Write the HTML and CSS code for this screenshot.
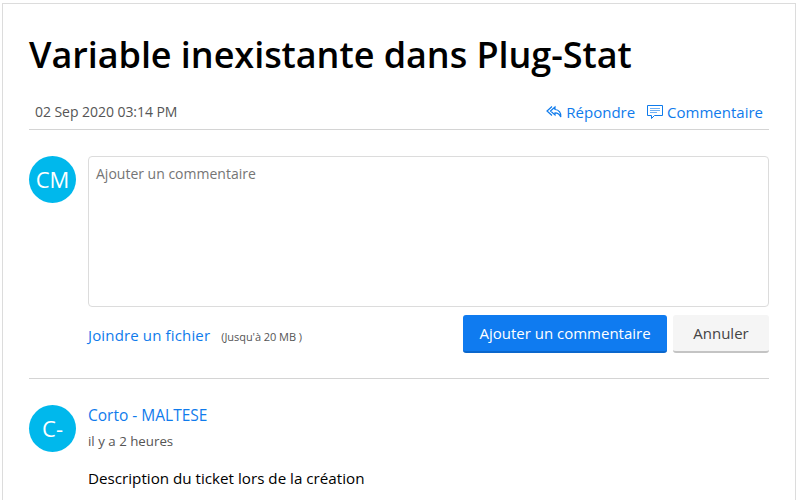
FILE: index.html
```html
<!DOCTYPE html>
<html lang="fr">
<head>
	<meta charset="utf-8">
	<title>Variable inexistante dans Plug-Stat</title>
	<link rel="stylesheet" href="styles.css">
</head>
<body>
	<div class="card">
		<h1 class="title">Variable inexistante dans Plug-Stat</h1>

		<div class="meta">
			<span class="date">02 Sep 2020 03:14 PM</span>
			<div class="actions">
				<a class="action" href="#">
					<svg class="icon" viewBox="0 0 16 14" width="16" height="14" fill="none" stroke="currentColor" stroke-width="1.200">
						<path d="M6 1.500 1 6l5 4.500"/>
						<path d="M9 2 4.500 6 9 10V7.800c2.500 0 4.500.7 5.800 4.200.6-4-1.800-7.300-5.800-7.500z"/>
					</svg>
					Répondre
				</a>
				<a class="action" href="#">
					<svg class="icon" viewBox="0 0 16 14" width="16" height="14" fill="none" stroke="currentColor" stroke-width="1">
						<path d="M.5.500h15v10H7.500L4.500 13.500v-3h-4z"/>
						<path class="icon-lines" d="M3 3.500h10M3 5.500h10M3 7.500h7"/>
					</svg>
					Commentaire
				</a>
			</div>
		</div>

		<div class="row new-comment">
			<div class="avatar">CM</div>
			<div class="main">
				<textarea class="input" placeholder="Ajouter un commentaire"></textarea>
				<div class="form-foot">
					<div class="attach">
						<a class="attach-link" href="#">Joindre un fichier</a>
						<small class="limit">(Jusqu'à 20 MB )</small>
					</div>
					<div class="buttons">
						<button class="btn btn-primary">Ajouter un commentaire</button>
						<button class="btn btn-cancel">Annuler</button>
					</div>
				</div>
			</div>
		</div>

		<div class="row comment">
			<div class="avatar">C-</div>
			<div class="main">
				<a class="author" href="#">Corto - MALTESE</a>
				<div class="ago">il y a 2 heures</div>
				<p class="text">Description du ticket lors de la création</p>
			</div>
		</div>
	</div>
</body>
</html>
```

FILE: styles.css
```css
html, body {
	height: 100%;
}

body {
	margin: 0;
	overflow: hidden;
	background: #fff;
	color: #000;
	font-family: "Open Sans", "Noto Sans", sans-serif;
	font-size: 15px;
}

a {
	color: #0f7bec;
	text-decoration: none;
}

.card {
	box-sizing: border-box;
	height: 520px;
	margin: 3px 2px 0;
	padding: 0 26px;
	border: 1px solid #dcdcdc;
}

.title {
	margin: 0;
	padding-top: 26px;
	font-size: 36px;
	line-height: 50px;
	font-weight: 600;
	letter-spacing: -0.05px;
}

.meta {
	display: flex;
	justify-content: space-between;
	align-items: center;
	box-sizing: border-box;
	height: 50px;
	padding: 14px 6px 0;
	border-bottom: 1px solid #d4d4d4;
}

.date {
	font-size: 14px;
	letter-spacing: -0.05px;
	color: #555;
}

.actions {
	display: flex;
	gap: 12px;
}

.action {
	display: flex;
	align-items: center;
	gap: 4px;
	font-size: 15px;
}

.icon {
	flex: none;
}

.icon-lines {
	stroke-opacity: 0.6;
}

.row {
	display: flex;
	gap: 12px;
}

.new-comment {
	padding: 26px 0 25px;
	border-bottom: 1px solid #d4d4d4;
}

.comment {
	padding-top: 26px;
}

.avatar {
	flex: none;
	width: 47px;
	height: 47px;
	border-radius: 50%;
	background: #00b8ec;
	color: #fff;
	font-size: 22px;
	line-height: 47px;
	text-align: center;
}

.main {
	flex: 1;
	min-width: 0;
}

.input {
	display: block;
	box-sizing: border-box;
	width: 100%;
	height: 151px;
	padding: 7px 7px;
	border: 1px solid #dcdcdc;
	border-radius: 4px;
	font: inherit;
	font-size: 14px;
	resize: none;
}

.input::placeholder {
	color: #757575;
}

.form-foot {
	display: flex;
	justify-content: space-between;
	margin-top: 8px;
}

.attach {
	display: flex;
	align-items: baseline;
	gap: 11px;
	padding-top: 10px;
}

.attach-link {
	font-size: 15px;
	letter-spacing: 0.15px;
}

.limit {
	font-size: 11px;
	letter-spacing: -0.05px;
	color: #555;
}

.buttons {
	display: flex;
	gap: 6px;
}

.btn {
	height: 38px;
	border: 0;
	border-radius: 3px;
	font: inherit;
	font-size: 15px;
}

.btn-primary {
	width: 204px;
	background: #0f7bf0;
	border-bottom: 2px solid #0b67cc;
	color: #fff;
}

.btn-cancel {
	width: 96px;
	background: #f5f5f5;
	border-bottom: 2px solid #c4c4c4;
	color: #444;
}

.author {
	display: block;
	font-size: 15.500px;
	line-height: 20px;
}

.ago {
	margin-top: 6px;
	font-size: 13.300px;
	line-height: 20px;
	color: #555;
}

.text {
	margin: 17px 0 0;
	font-size: 15.200px;
	line-height: 20px;
}
```
